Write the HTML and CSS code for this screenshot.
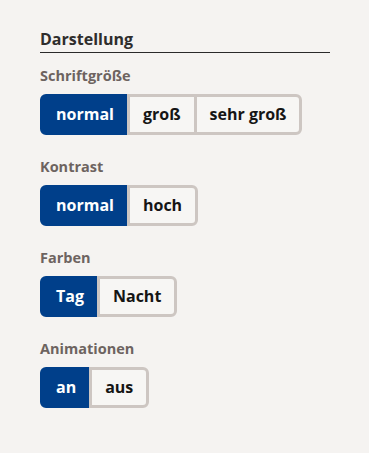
FILE: index.html
```html
<!DOCTYPE html>
<html lang="de">
<head>
<meta charset="utf-8">
<title>Darstellung</title>
<link rel="stylesheet" href="styles.css">
</head>
<body>
<div class="panel">
  <h2 class="panel-title">Darstellung</h2>
  <div class="sections">
    <div class="section">
      <div class="label">Schriftgröße</div>
      <div class="group">
        <button class="opt active">normal</button>
        <button class="opt">groß</button>
        <button class="opt">sehr groß</button>
      </div>
    </div>
    <div class="section">
      <div class="label">Kontrast</div>
      <div class="group">
        <button class="opt active">normal</button>
        <button class="opt">hoch</button>
      </div>
    </div>
    <div class="section">
      <div class="label">Farben</div>
      <div class="group">
        <button class="opt active">Tag</button>
        <button class="opt">Nacht</button>
      </div>
    </div>
    <div class="section">
      <div class="label">Animationen</div>
      <div class="group">
        <button class="opt active">an</button>
        <button class="opt">aus</button>
      </div>
    </div>
  </div>
</div>
</body>
</html>
```
FILE: styles.css
```css
html, body {
  margin: 0;
  padding: 0;
  background: #f5f3f1;
}
body {
  font-family: "Open Sans", Lato, sans-serif;
  font-weight: 700;
}
.panel {
  width: 290px;
  padding: 27.5px 0 0 40px;
}
.panel-title {
  margin: 0;
  font-size: 16px;
  line-height: 22px;
  font-weight: 700;
  color: #2f2d2c;
  padding-bottom: 2px;
  border-bottom: 1px solid #2a2a2a;
}
.sections {
  display: flex;
  flex-direction: column;
  gap: 22px;
  margin-top: 13.2px;
}
.label {
  font-size: 14.5px;
  line-height: 20px;
  color: #6d6360;
  margin-bottom: 8px;
}
.group {
  display: inline-flex;
}
.opt {
  font-family: inherit;
  font-weight: 700;
  font-size: 16px;
  line-height: 35px;
  height: 41px;
  padding: 0 13px;
  margin: 0 0 0 -3px;
  border: 3px solid #cdc6c2;
  background: #f7f6f4;
  color: #151515;
  cursor: pointer;
}
.opt:first-child {
  margin-left: 0;
  border-radius: 6px 0 0 6px;
}
.opt:last-child {
  border-radius: 0 6px 6px 0;
}
.opt.active {
  background: #003f8a;
  border-color: #003f8a;
  color: #ffffff;
}
```
